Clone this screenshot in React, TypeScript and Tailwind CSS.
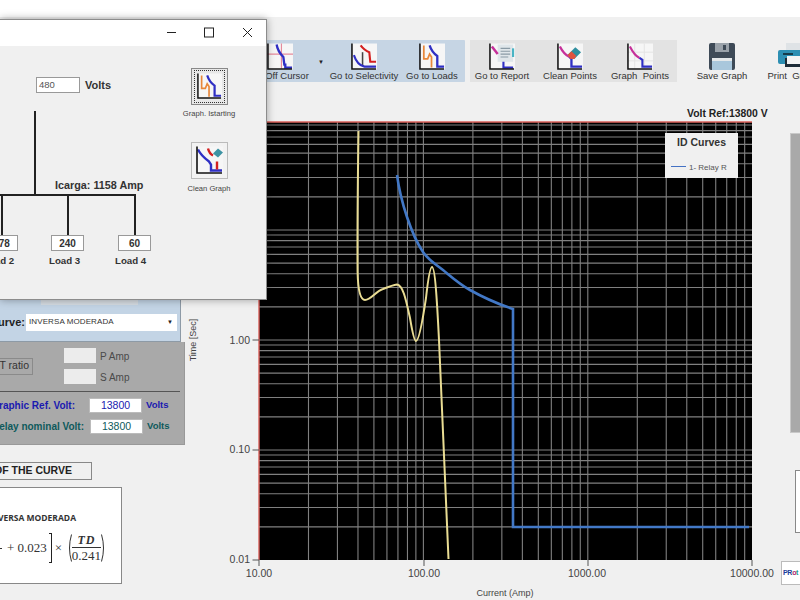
import React from "react";

const font = { fontFamily: '"Liberation Sans", Arial, sans-serif' };

const BLUE = "#2f2fc4";
function Axes() {
  return <path d="M1 0V26.5H26" fill="none" stroke="#111" strokeWidth="1.6" />;
}
function CurveIcon({ kind, w = 26, h = 28 }: { kind: string; w?: number; h?: number }) {
  return (
    <svg width={w} height={h} viewBox="0 0 27 28" className="shrink-0">
      <rect x="1" y="0" width="26" height="27" fill="#f6f6f6" />
      {kind === "cursor" && (
        <>
          <path d="M0 11H27M15 0V26" stroke="#e58a9c" strokeWidth="1.2" fill="none" />
          <path d="M10 1C11 8 14 11 17 14L18 22H19V25H26" stroke={BLUE} strokeWidth="2.4" fill="none" />
        </>
      )}
      {kind === "selectivity" && (
        <>
          <path d="M12 9V23" stroke="#444" strokeWidth="1.6" fill="none" />
          <path d="M10 2C13 6 16 8 19 9L20 19H26" stroke="#d42020" strokeWidth="2.2" fill="none" />
          <path d="M3 12C5 18 9 23 14 24H26" stroke={BLUE} strokeWidth="2.2" fill="none" />
        </>
      )}
      {kind === "loads" && (
        <>
          <path d="M5 2V16H9L11 11L13 14V25" stroke="#e8873a" strokeWidth="1.8" fill="none" />
          <path d="M11 2C13 8 16 11 19 13V24H26" stroke={BLUE} strokeWidth="2.4" fill="none" />
        </>
      )}
      {kind === "report" && (
        <>
          <rect x="9" y="1" width="16" height="18" fill="#dfe6ea" />
          <path d="M12 5H22M12 8H22M12 11H22M12 14H20" stroke="#8a9aa5" strokeWidth="1.2" />
          <path d="M3 3L9 11" stroke="#c6309a" strokeWidth="2.6" />
          <path d="M25 5V14" stroke="#49b4c4" strokeWidth="2.2" />
          <path d="M15 19V25H25" stroke={BLUE} strokeWidth="2.2" fill="none" />
        </>
      )}
      {kind === "clean" && (
        <>
          <path d="M3 3C6 9 9 12 13 14" stroke="#c6309a" strokeWidth="2.4" fill="none" />
          <path d="M13 14L15 16V24H26" stroke={BLUE} strokeWidth="2.4" fill="none" />
          <path d="M11 12L19 4L25 9L18 16Z" fill="#2f8f9f" />
          <path d="M11 12L15 8L20 13L18 16H14Z" fill="#e0533f" />
        </>
      )}
      {kind === "points" && (
        <>
          <path d="M8 0V26M18 0V26M1 9H27M1 18H27" stroke="#e4e4e4" strokeWidth="1" />
          <path d="M3 3C6 9 9 13 13 15" stroke="#c6309a" strokeWidth="2.2" fill="none" />
          <path d="M13 15L16 17V24H26" stroke={BLUE} strokeWidth="2.2" fill="none" />
        </>
      )}
      {kind === "cleangraph" && (
        <>
          <path d="M2 3C5 9 9 12 13 15L15 18V24H26" stroke={BLUE} strokeWidth="2.4" fill="none" />
          <path d="M12 2C13 6 15 8 17 9M21 15V23" stroke="#d42020" strokeWidth="2.4" fill="none" />
          <path d="M17 7L22 2L27 6L22 11Z" fill="#3d93a3" />
        </>
      )}
      <Axes />
    </svg>
  );
}

function SaveIcon() {
  return (
    <svg width="28" height="27" viewBox="0 0 28 27">
      <path d="M1 2Q1 0 3 0H25Q27 0 27 2V25Q27 27 25 27H3Q1 27 1 25Z" fill="#3e4a57" />
      <rect x="7" y="0" width="14" height="9" fill="#9aa2aa" />
      <rect x="15" y="2" width="3" height="5" fill="#3e4a57" />
      <rect x="4" y="15" width="20" height="12" fill="#a9c7dc" />
      <rect x="4" y="15" width="20" height="3" fill="#e4e8ea" />
    </svg>
  );
}
function PrintIcon() {
  return (
    <svg width="38" height="24" viewBox="0 0 38 24">
      <rect x="8" y="0" width="22" height="8" fill="#dfe3e6" />
      <rect x="0" y="7" width="38" height="14" rx="2" fill="#2d8fb3" />
      <rect x="5" y="10" width="10" height="2" fill="#173b4a" />
      <rect x="7" y="15" width="24" height="9" fill="#1e2c38" />
      <rect x="9" y="13" width="20" height="8" fill="#f4f4f4" />
    </svg>
  );
}

function ToolButton({ label, width, children }: { label: string; width: string; children: React.ReactNode }) {
  return (
    <div className={`flex flex-col items-center shrink-0 ${width}`}>
      <div className="h-[27px] flex items-start justify-center">{children}</div>
      <div className="text-[9.5px] leading-[11px] text-[#333] whitespace-pre">{label}</div>
    </div>
  );
}

const DEC = [10, 100, 1000];
const xOf = (v: number) => 259 + (Math.log10(v) - 1) * 164.4;
const yOf = (v: number) => 340 - Math.log10(v) * 110;

function Chart() {
  const vs: number[] = [];
  for (const d of DEC) for (let m = 1; m <= 9; m++) if (d * m > 10) vs.push(xOf(d * m));
  const hs: number[] = [];
  for (const d of [0.01, 0.1, 1, 10]) for (let m = 1; m <= 9; m++) if (d * m > 0.01) hs.push(yOf(d * m));
  const labelStyle = { fontFamily: '"Liberation Sans", Arial, sans-serif' };
  return (
    <svg width="595" height="495" viewBox="185 105 595 495" className="block" style={labelStyle}>
      <rect x="259" y="122" width="493" height="438" fill="#000" />
      {vs.map((x, i) => (
        <line key={i} x1={x} x2={x} y1="122" y2="560" stroke="#808080" strokeWidth="1.1" />
      ))}
      {hs.map((y, i) => (
        <line key={i} x1="259" x2="752" y1={y} y2={y} stroke="#808080" strokeWidth="1.1" />
      ))}
      <path d="M259 560V122H752" fill="none" stroke="#d9605a" strokeWidth="1.4" />
      <path d="M252.5 340H259M252.5 450H259M252.5 560H259M259 560V566M424 560V566M588 560V566M752 560V566" stroke="#555" strokeWidth="1" />
      <path
        d="M358.5 131C357.8 180 357.3 240 357.6 272C358 290 360 300 365 300C371 300 376 291 383 289C388 287 393 285 397 284.5C403 285 406 300 410 318C412 330 414 341 416 341C419 341 423 318 426 298C428 280 430 267 432 267C435 267 437 300 439 340L448.5 559"
        fill="none" stroke="#e9dc93" strokeWidth="2"
      />
      <path
        d="M397 175C399 190 402.7 204.2 407 217C411.3 229.8 417 243.2 423 252C429 260.8 435.2 263.7 443 270C450.8 276.3 458.5 283.5 470 290C481.5 296.5 498 304 513 309V527H749"
        fill="none" stroke="#4278c6" strokeWidth="2.6"
      />
      <g fontSize="10.5" fill="#444">
        <text x="250" y="344" textAnchor="end">1.00</text>
        <text x="250" y="453" textAnchor="end">0.10</text>
        <text x="250" y="563" textAnchor="end">0.01</text>
        <text x="259" y="577" textAnchor="middle">10.00</text>
        <text x="424" y="577" textAnchor="middle">100.00</text>
        <text x="587" y="577" textAnchor="middle">1000.00</text>
        <text x="752" y="577" textAnchor="middle">10000.00</text>
      </g>
      <text x="505" y="596" textAnchor="middle" fontSize="9" fill="#444">Current (Amp)</text>
      <text transform="translate(196 340) rotate(-90)" textAnchor="middle" fontSize="9" fill="#444">Time [Sec]</text>
      <text x="687" y="117" fontSize="10.4" fontWeight="700" fill="#222">Volt Ref:13800 V</text>
    </svg>
  );
}

function Formula() {
  return (
    <div className="flex items-center h-[30px] text-[#333]" style={{ fontFamily: '"Liberation Serif", serif' }}>
      <div className="w-[2px] h-[1px] bg-[#333] mr-[5px]" />
      <span className="text-[13px] whitespace-nowrap">+ 0.023</span>
      <div className="w-[3px] h-[30px] border-y border-r border-[#222] ml-[2px] mr-[3px]" />
      <span className="text-[13px] w-[8px]">×</span>
      <svg width="5" height="28" viewBox="0 0 5 28" className="ml-[4px]"><path d="M4.5 0.5Q0.5 14 4.5 27.5" fill="none" stroke="#333" /></svg>
      <div className="flex flex-col items-center leading-none">
        <span className="text-[12px] font-bold italic tracking-[1px] pb-[1px]">TD</span>
        <span className="text-[13px] border-t border-[#333] pt-[1px]">0.241</span>
      </div>
      <svg width="5" height="28" viewBox="0 0 5 28"><path d="M0.5 0.5Q4.5 14 0.5 27.5" fill="none" stroke="#333" /></svg>
    </div>
  );
}

function LeftColumn() {
  return (
    <div className="w-[185px] shrink-0 flex flex-col">
      <div className="w-[181px] h-[237px] bg-[#c3d4e5] border-r border-b border-[#8d9aa6] flex flex-col justify-end pb-[10px]">
        <div className="h-[5px] w-[97px] ml-[41px] bg-[#d6dce2] mb-[8px]" />
        <div className="flex items-center h-[18px]">
          <div className="w-[26px] overflow-hidden flex justify-end pr-[1px]">
            <span className="text-[11px] font-bold text-[#222] whitespace-nowrap">Curve:</span>
          </div>
          <div className="w-[151px] h-[17px] bg-white flex items-center justify-between pl-[3px] pr-[4px]">
            <span className="text-[8px] text-[#333] tracking-[0.1px] whitespace-nowrap">INVERSA MODERADA</span>
            <span className="text-[6px] text-[#222]">▼</span>
          </div>
        </div>
      </div>
      <div className="w-[185px] h-[103px] bg-[#a9a9a9] border-r border-b border-[#999] flex flex-col pt-[6px]">
        <div className="flex h-[36px]">
          <div className="w-[64px] flex items-center">
            <div className="w-[33px] h-[17px] overflow-hidden border border-[#8a8a8a] border-l-0 flex justify-end items-center pr-[3px] text-[10.5px] text-[#333] whitespace-nowrap">CT ratio</div>
          </div>
          <div className="flex flex-col gap-[6px]">
            <div className="flex items-center gap-[4px] h-[15px]">
              <div className="w-[32px] h-[15px] bg-[#ececec]" />
              <span className="text-[10px] text-[#4a4a4a] pt-[1px]">P Amp</span>
            </div>
            <div className="flex items-center gap-[4px] h-[15px]">
              <div className="w-[32px] h-[15px] bg-[#ececec]" />
              <span className="text-[10px] text-[#4a4a4a] pt-[1px]">S Amp</span>
            </div>
          </div>
        </div>
        <div className="h-[1px] w-[180px] bg-[#555] mt-[7px] mb-[6px]" />
        <div className="flex items-center h-[15px] text-[#1a1ab0] font-bold text-[9.5px]">
          <div className="w-[75px] overflow-hidden flex justify-end text-[10px]">
            <span className="whitespace-nowrap">Graphic Ref. Volt:</span>
          </div>
          <div className="ml-[14px] w-[53px] h-[15px] bg-white border border-[#bbb] flex items-center justify-center text-[10.5px] font-normal">13800</div>
          <span className="ml-[4px]">Volts</span>
        </div>
        <div className="flex items-center h-[15px] mt-[6px] text-[#0e5a5c] font-bold text-[9.5px]">
          <div className="w-[84px] overflow-hidden flex justify-end text-[10px]">
            <span className="whitespace-nowrap">Relay nominal Volt:</span>
          </div>
          <div className="ml-[6px] w-[53px] h-[15px] bg-white border border-[#bbb] flex items-center justify-center text-[10.5px] font-normal">13800</div>
          <span className="ml-[4px]">Volts</span>
        </div>
      </div>
      <div className="mt-[17px] w-[92px] h-[18px] border border-l-0 border-[#888] overflow-hidden flex items-center justify-end pr-[19px]">
        <span className="text-[10.5px] font-bold text-[#222] whitespace-nowrap">GRAPH OF THE CURVE</span>
      </div>
      <div className="mt-[7px] w-[122px] h-[97px] bg-white border border-l-0 border-[#888] flex flex-col justify-start pt-[24px]">
        <div className="h-[12px] overflow-hidden flex justify-end pr-[45px]">
          <span className="text-[8.5px] font-bold text-[#333] whitespace-nowrap leading-[12px]" style={{ fontFamily: '"Open Sans", sans-serif' }}>INVERSA MODERADA</span>
        </div>
        <div className="mt-[9px]">
          <Formula />
        </div>
      </div>
    </div>
  );
}

function Toolbar() {
  return (
    <div className="flex h-[42px] mt-[23px] ml-[240px] w-[640px]">
      <div className="flex items-start pt-[3px] pl-[25px] pr-[7px] bg-[#c6d5e4] rounded-[1px]">
        <ToolButton label="Off Cursor" width="w-[44px]"><div className="mr-[15px]"><CurveIcon kind="cursor" /></div></ToolButton>
        <div className="w-[21px] flex justify-center pt-[15px] pl-[3px] text-[6px] text-[#222]">▼</div>
        <ToolButton label="Go to Selectivity" width="w-[68px]"><CurveIcon kind="selectivity" /></ToolButton>
        <div className="ml-[8px]"><ToolButton label="Go to Loads" width="w-[52px]"><CurveIcon kind="loads" /></ToolButton></div>
      </div>
      <div className="flex items-start pt-[3px] ml-[5px] pl-[4px] pr-[7px] bg-[#e3e3e3]">
        <ToolButton label="Go to Report" width="w-[56px]"><CurveIcon kind="report" /></ToolButton>
        <div className="ml-[13px]"><ToolButton label="Clean Points" width="w-[54px]"><CurveIcon kind="clean" /></ToolButton></div>
        <div className="ml-[13px]"><ToolButton label="Graph  Points" width="w-[60px]"><CurveIcon kind="points" /></ToolButton></div>
      </div>
      <div className="flex items-start pt-[3px] ml-[20px]">
        <ToolButton label="Save Graph" width="w-[50px]"><SaveIcon /></ToolButton>
        <div className="ml-[20px]"><ToolButton label="Print  Graph" width="w-[52px]"><div className="ml-[8px]"><PrintIcon /></div></ToolButton></div>
      </div>
    </div>
  );
}

function Dialog() {
  const box = "absolute h-[16px] bg-white border border-[#999] flex items-center justify-center text-[10px] font-bold text-[#333]";
  const label = "absolute text-[9.7px] font-bold text-[#333] whitespace-nowrap";
  return (
    <div className="absolute left-0 top-[19px] w-[267px] h-[281px] bg-[#f0f0f0] border border-l-0 border-[#8c8c8c] shadow-[0_0_8px_rgba(0,0,0,0.35)] flex flex-col overflow-hidden">
      <div className="h-[26px] bg-white flex items-center justify-end shrink-0">
        <svg width="100" height="26" viewBox="0 0 100 26" fill="none" stroke="#222" strokeWidth="1">
          <path d="M2 12.5H11" />
          <rect x="39.5" y="8" width="9" height="9" />
          <path d="M78 8L87 17M87 8L78 17" />
        </svg>
        <div className="w-[1px]" />
      </div>
      <div className="flex flex-1">
        <div className="relative w-[190px]">
          <div className="absolute left-[36px] top-[31px] w-[44px] h-[16px] bg-white border border-[#999] flex items-center pl-[2px] text-[9.5px] text-[#555]">480</div>
          <span className="absolute left-[85px] top-[31px] text-[11px] font-bold text-[#333]">Volts</span>
          <div className="absolute left-[34px] top-[65px] w-[1.5px] h-[84px] bg-[#222]" />
          <span className="absolute left-[55px] top-[131px] text-[10.8px] font-bold text-[#333] whitespace-nowrap">Icarga: 1158 Amp</span>
          <div className="absolute left-0 top-[148px] w-[135px] h-[1.5px] bg-[#222]" />
          <div className="absolute left-[1px] top-[148px] w-[1.5px] h-[42px] bg-[#222]" />
          <div className="absolute left-[67px] top-[148px] w-[1.5px] h-[42px] bg-[#222]" />
          <div className="absolute left-[134px] top-[148px] w-[1.5px] h-[42px] bg-[#222]" />
          <div className={`${box} left-[-15px] top-[189px] w-[33px]`}>178</div>
          <div className={`${box} left-[51px] top-[189px] w-[33px]`}>240</div>
          <div className={`${box} left-[118px] top-[189px] w-[33px]`}>60</div>
          <span className={`${label} left-[-17px] top-[208px]`}>Load 2</span>
          <span className={`${label} left-[49px] top-[208px]`}>Load 3</span>
          <span className={`${label} left-[115px] top-[208px]`}>Load 4</span>
        </div>
        <div className="flex flex-col items-center w-[38px] pt-[22px]">
          <div className="w-[37px] h-[37px] border border-[#888] bg-[#e8e8e8] flex items-center justify-center">
            <div className="border border-dotted border-[#333] p-[2px]"><CurveIcon kind="loads" w={25} h={27} /></div>
          </div>
          <span className="text-[7.6px] text-[#444] mt-[3px] whitespace-nowrap leading-[12px]">Graph. Istarting</span>
          <div className="w-[37px] h-[37px] mt-[22px] border border-[#bbb] bg-[#f2f2f2] flex items-center justify-center">
            <CurveIcon kind="cleangraph" w={27} h={29} />
          </div>
          <span className="text-[7.6px] text-[#444] mt-[4px] whitespace-nowrap leading-[12px]">Clean Graph</span>
        </div>
      </div>
    </div>
  );
}

export default function App() {
  return (
    <div className="relative w-[800px] h-[600px] overflow-hidden bg-[#f0f0f0] flex flex-col" style={font}>
      <div className="h-[17px] bg-white shrink-0" />
      <Toolbar />
      <div className="flex h-[495px] mt-[23px]">
        <LeftColumn />
        <div className="relative w-[595px] shrink-0">
          <Chart />
          <div className="absolute left-[480px] top-[28px] w-[73px] h-[45px] bg-[#f0f0f0] flex flex-col">
            <div className="text-[10.5px] font-bold text-[#333] text-center mt-[2px]">ID Curves</div>
            <div className="flex items-center mt-[11px] pl-[6px]">
              <div className="w-[15px] h-[1.5px] bg-[#4472c4] mb-[3px]" />
              <span className="ml-[3px] text-[8px] text-[#555] whitespace-nowrap">1- Relay R</span>
            </div>
          </div>
        </div>
        <div className="w-[20px] shrink-0 flex flex-col items-end">
          <div className="mt-[28px] w-[10px] h-[300px] bg-[#a9a9a9] border border-r-0 border-[#c8c8c8]" />
          <div className="mt-[37px] w-[5px] h-[63px] bg-white border border-r-0 border-[#888]" />
          <div className="mt-[28px] w-[19px] h-[24px] bg-white border border-r-0 border-[#bbb] overflow-hidden flex items-center">
            <span className="text-[7px] font-bold tracking-[-0.3px] text-[#1a3a9a] ml-[1px] whitespace-nowrap">PR<span className="text-[#b01a6a]">o</span><span className="text-[#1a9a8a]">t</span></span>
          </div>
        </div>
      </div>
      <Dialog />
    </div>
  );
}
